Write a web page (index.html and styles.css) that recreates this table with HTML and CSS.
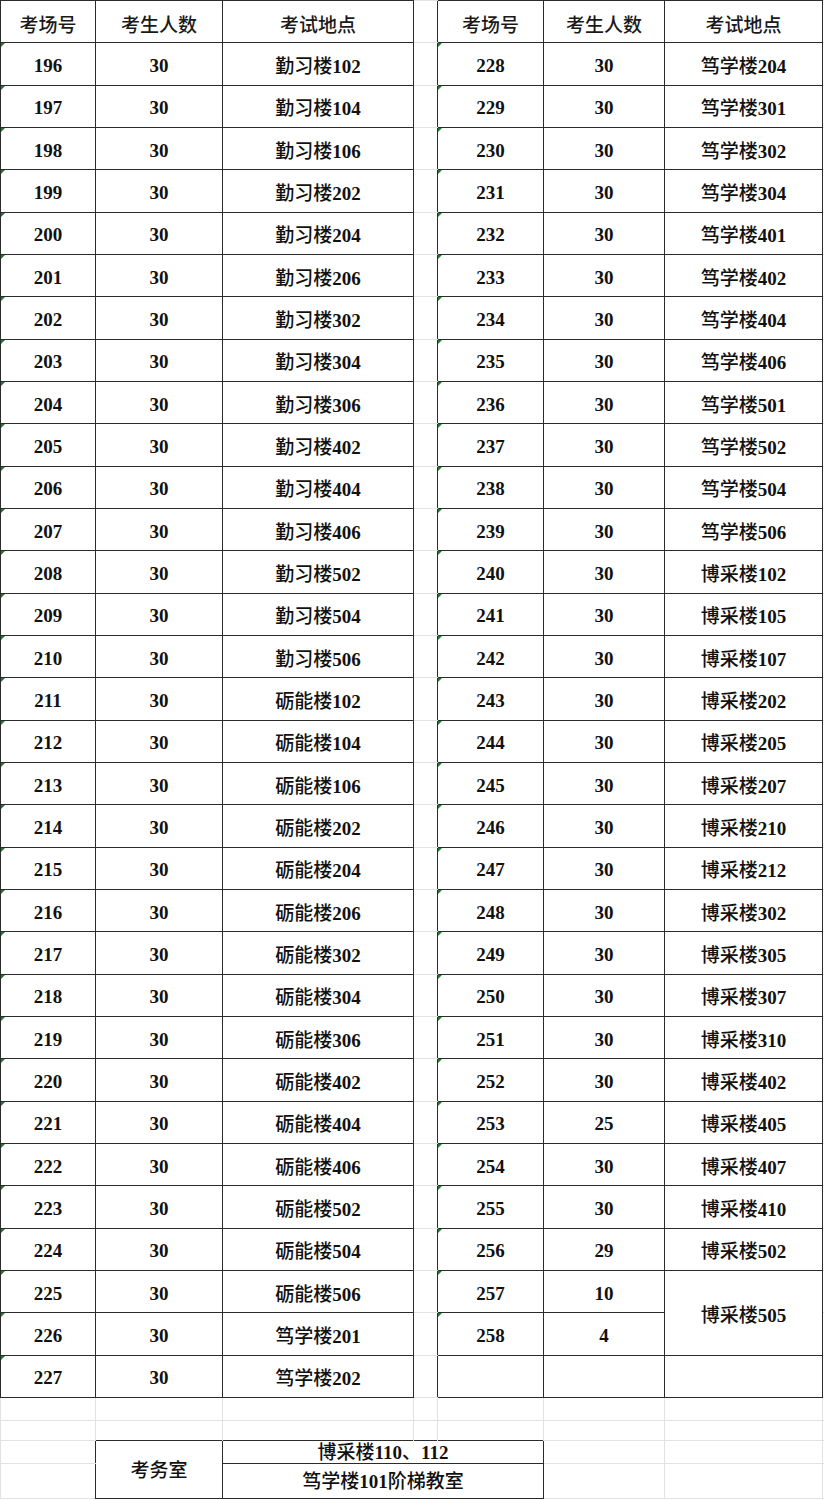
FILE: index.html
```html
<!DOCTYPE html>
<html lang="zh-CN">
<head>
<meta charset="utf-8">
<title>考场安排</title>
<link rel="stylesheet" href="styles.css">
</head>
<body>
<table class="sheet">
<colgroup>
<col class="w-no"><col class="w-num"><col class="w-place"><col class="w-gap"><col class="w-no2"><col class="w-num2"><col class="w-place2"><col class="w-tail">
</colgroup>
<tbody>
<tr class="r">
<td class="c hd">考场号</td><td class="c hd">考生人数</td><td class="c hd">考试地点</td><td class="g gap"></td>
<td class="c hd">考场号</td><td class="c hd">考生人数</td><td class="c hd">考试地点</td><td class="g"></td>
</tr>
<tr class="r"><td class="c k">196</td><td class="c">30</td><td class="c"><span class="zh">勤习楼</span>102</td><td class="g gap"></td><td class="c k">228</td><td class="c">30</td><td class="c"><span class="zh">笃学楼</span>204</td><td class="g"></td></tr>
<tr class="r"><td class="c k">197</td><td class="c">30</td><td class="c"><span class="zh">勤习楼</span>104</td><td class="g gap"></td><td class="c k">229</td><td class="c">30</td><td class="c"><span class="zh">笃学楼</span>301</td><td class="g"></td></tr>
<tr class="r"><td class="c k">198</td><td class="c">30</td><td class="c"><span class="zh">勤习楼</span>106</td><td class="g gap"></td><td class="c k">230</td><td class="c">30</td><td class="c"><span class="zh">笃学楼</span>302</td><td class="g"></td></tr>
<tr class="r"><td class="c k">199</td><td class="c">30</td><td class="c"><span class="zh">勤习楼</span>202</td><td class="g gap"></td><td class="c k">231</td><td class="c">30</td><td class="c"><span class="zh">笃学楼</span>304</td><td class="g"></td></tr>
<tr class="r"><td class="c k">200</td><td class="c">30</td><td class="c"><span class="zh">勤习楼</span>204</td><td class="g gap"></td><td class="c k">232</td><td class="c">30</td><td class="c"><span class="zh">笃学楼</span>401</td><td class="g"></td></tr>
<tr class="r"><td class="c k">201</td><td class="c">30</td><td class="c"><span class="zh">勤习楼</span>206</td><td class="g gap"></td><td class="c k">233</td><td class="c">30</td><td class="c"><span class="zh">笃学楼</span>402</td><td class="g"></td></tr>
<tr class="r"><td class="c k">202</td><td class="c">30</td><td class="c"><span class="zh">勤习楼</span>302</td><td class="g gap"></td><td class="c k">234</td><td class="c">30</td><td class="c"><span class="zh">笃学楼</span>404</td><td class="g"></td></tr>
<tr class="r"><td class="c k">203</td><td class="c">30</td><td class="c"><span class="zh">勤习楼</span>304</td><td class="g gap"></td><td class="c k">235</td><td class="c">30</td><td class="c"><span class="zh">笃学楼</span>406</td><td class="g"></td></tr>
<tr class="r"><td class="c k">204</td><td class="c">30</td><td class="c"><span class="zh">勤习楼</span>306</td><td class="g gap"></td><td class="c k">236</td><td class="c">30</td><td class="c"><span class="zh">笃学楼</span>501</td><td class="g"></td></tr>
<tr class="r"><td class="c k">205</td><td class="c">30</td><td class="c"><span class="zh">勤习楼</span>402</td><td class="g gap"></td><td class="c k">237</td><td class="c">30</td><td class="c"><span class="zh">笃学楼</span>502</td><td class="g"></td></tr>
<tr class="r"><td class="c k">206</td><td class="c">30</td><td class="c"><span class="zh">勤习楼</span>404</td><td class="g gap"></td><td class="c k">238</td><td class="c">30</td><td class="c"><span class="zh">笃学楼</span>504</td><td class="g"></td></tr>
<tr class="r"><td class="c k">207</td><td class="c">30</td><td class="c"><span class="zh">勤习楼</span>406</td><td class="g gap"></td><td class="c k">239</td><td class="c">30</td><td class="c"><span class="zh">笃学楼</span>506</td><td class="g"></td></tr>
<tr class="r"><td class="c k">208</td><td class="c">30</td><td class="c"><span class="zh">勤习楼</span>502</td><td class="g gap"></td><td class="c k">240</td><td class="c">30</td><td class="c"><span class="zh">博采楼</span>102</td><td class="g"></td></tr>
<tr class="r"><td class="c k">209</td><td class="c">30</td><td class="c"><span class="zh">勤习楼</span>504</td><td class="g gap"></td><td class="c k">241</td><td class="c">30</td><td class="c"><span class="zh">博采楼</span>105</td><td class="g"></td></tr>
<tr class="r"><td class="c k">210</td><td class="c">30</td><td class="c"><span class="zh">勤习楼</span>506</td><td class="g gap"></td><td class="c k">242</td><td class="c">30</td><td class="c"><span class="zh">博采楼</span>107</td><td class="g"></td></tr>
<tr class="r"><td class="c k">211</td><td class="c">30</td><td class="c"><span class="zh">砺能楼</span>102</td><td class="g gap"></td><td class="c k">243</td><td class="c">30</td><td class="c"><span class="zh">博采楼</span>202</td><td class="g"></td></tr>
<tr class="r"><td class="c k">212</td><td class="c">30</td><td class="c"><span class="zh">砺能楼</span>104</td><td class="g gap"></td><td class="c k">244</td><td class="c">30</td><td class="c"><span class="zh">博采楼</span>205</td><td class="g"></td></tr>
<tr class="r"><td class="c k">213</td><td class="c">30</td><td class="c"><span class="zh">砺能楼</span>106</td><td class="g gap"></td><td class="c k">245</td><td class="c">30</td><td class="c"><span class="zh">博采楼</span>207</td><td class="g"></td></tr>
<tr class="r"><td class="c k">214</td><td class="c">30</td><td class="c"><span class="zh">砺能楼</span>202</td><td class="g gap"></td><td class="c k">246</td><td class="c">30</td><td class="c"><span class="zh">博采楼</span>210</td><td class="g"></td></tr>
<tr class="r"><td class="c k">215</td><td class="c">30</td><td class="c"><span class="zh">砺能楼</span>204</td><td class="g gap"></td><td class="c k">247</td><td class="c">30</td><td class="c"><span class="zh">博采楼</span>212</td><td class="g"></td></tr>
<tr class="r"><td class="c k">216</td><td class="c">30</td><td class="c"><span class="zh">砺能楼</span>206</td><td class="g gap"></td><td class="c k">248</td><td class="c">30</td><td class="c"><span class="zh">博采楼</span>302</td><td class="g"></td></tr>
<tr class="r"><td class="c k">217</td><td class="c">30</td><td class="c"><span class="zh">砺能楼</span>302</td><td class="g gap"></td><td class="c k">249</td><td class="c">30</td><td class="c"><span class="zh">博采楼</span>305</td><td class="g"></td></tr>
<tr class="r"><td class="c k">218</td><td class="c">30</td><td class="c"><span class="zh">砺能楼</span>304</td><td class="g gap"></td><td class="c k">250</td><td class="c">30</td><td class="c"><span class="zh">博采楼</span>307</td><td class="g"></td></tr>
<tr class="r"><td class="c k">219</td><td class="c">30</td><td class="c"><span class="zh">砺能楼</span>306</td><td class="g gap"></td><td class="c k">251</td><td class="c">30</td><td class="c"><span class="zh">博采楼</span>310</td><td class="g"></td></tr>
<tr class="r"><td class="c k">220</td><td class="c">30</td><td class="c"><span class="zh">砺能楼</span>402</td><td class="g gap"></td><td class="c k">252</td><td class="c">30</td><td class="c"><span class="zh">博采楼</span>402</td><td class="g"></td></tr>
<tr class="r"><td class="c k">221</td><td class="c">30</td><td class="c"><span class="zh">砺能楼</span>404</td><td class="g gap"></td><td class="c k">253</td><td class="c">25</td><td class="c"><span class="zh">博采楼</span>405</td><td class="g"></td></tr>
<tr class="r"><td class="c k">222</td><td class="c">30</td><td class="c"><span class="zh">砺能楼</span>406</td><td class="g gap"></td><td class="c k">254</td><td class="c">30</td><td class="c"><span class="zh">博采楼</span>407</td><td class="g"></td></tr>
<tr class="r"><td class="c k">223</td><td class="c">30</td><td class="c"><span class="zh">砺能楼</span>502</td><td class="g gap"></td><td class="c k">255</td><td class="c">30</td><td class="c"><span class="zh">博采楼</span>410</td><td class="g"></td></tr>
<tr class="r"><td class="c k">224</td><td class="c">30</td><td class="c"><span class="zh">砺能楼</span>504</td><td class="g gap"></td><td class="c k">256</td><td class="c">29</td><td class="c"><span class="zh">博采楼</span>502</td><td class="g"></td></tr>
<tr class="r"><td class="c k">225</td><td class="c">30</td><td class="c"><span class="zh">砺能楼</span>506</td><td class="g gap"></td><td class="c k">257</td><td class="c">10</td><td class="c" rowspan="2"><span class="zh">博采楼</span>505</td><td class="g"></td></tr>
<tr class="r"><td class="c k">226</td><td class="c">30</td><td class="c"><span class="zh">笃学楼</span>201</td><td class="g gap"></td><td class="c k">258</td><td class="c">4</td><td class="g"></td></tr>
<tr class="r"><td class="c k">227</td><td class="c">30</td><td class="c"><span class="zh">笃学楼</span>202</td><td class="g gap"></td><td class="c"></td><td class="c"></td><td class="c"></td><td class="g"></td></tr>
<tr class="e1"><td class="g"></td><td class="g"></td><td class="g"></td><td class="g"></td><td class="g"></td><td class="g"></td><td class="g"></td><td class="g"></td></tr>
<tr class="e2"><td class="g"></td><td class="g nb"></td><td class="g nb"></td><td class="g nb"></td><td class="g nb"></td><td class="g"></td><td class="g"></td><td class="g"></td></tr>
<tr class="e3"><td class="g nr"></td><td class="c box" rowspan="2"><span class="zh">考务室</span></td><td class="c box" colspan="3"><span class="zh">博采楼</span>110<span class="zh">、</span>112</td><td class="g"></td><td class="g"></td><td class="g"></td></tr>
<tr class="e4"><td class="g nr"></td><td class="c box" colspan="3"><span class="zh">笃学楼</span>101<span class="zh">阶梯教室</span></td><td class="g"></td><td class="g"></td><td class="g"></td></tr>
</tbody>
</table>
</body>
</html>
```

FILE: styles.css
```css
html, body {
  margin: 0;
  padding: 0;
  background: #ffffff;
}

.sheet {
  width: 824px;
  table-layout: fixed;
  border-collapse: collapse;
  font-family: "Liberation Serif", "Noto Sans CJK SC", serif;
  font-size: 19px;
  font-weight: 700;
  color: #111111;
}

.w-no { width: 95px; }
.w-num { width: 127px; }
.w-place { width: 191px; }
.w-gap { width: 24px; }
.w-no2 { width: 106px; }
.w-num2 { width: 121px; }
.w-place2 { width: 158px; }
.w-tail { width: 2px; }

.sheet td {
  padding: 0;
  text-align: center;
  vertical-align: middle;
  line-height: 20px;
  white-space: nowrap;
}

.r td {
  height: 37.33px;
  padding-top: 4px;
}
.e1 td { height: 22.5px; }
.e2 td { height: 19px; }
.e3 td { height: 21.5px; }
.e4 td { height: 34px; }

.c { border: 1px solid #2b2b2b; }
.g { border: 1px solid #e2e2e2; }
.gap { border-right: none; }
.nb { border-bottom: none; }
.nr { border-right: none; }

.zh {
  font-family: "Noto Sans CJK SC", sans-serif;
  font-weight: 500;
}

.hd {
  font-family: "Noto Sans CJK SC", sans-serif;
  font-weight: 500;
  color: #1a1a1a;
}

.k { position: relative; }
.k::before {
  content: "";
  position: absolute;
  top: 0;
  left: 0;
  width: 0;
  height: 0;
  border-top: 4px solid #1f7a2a;
  border-right: 4px solid transparent;
}
```
